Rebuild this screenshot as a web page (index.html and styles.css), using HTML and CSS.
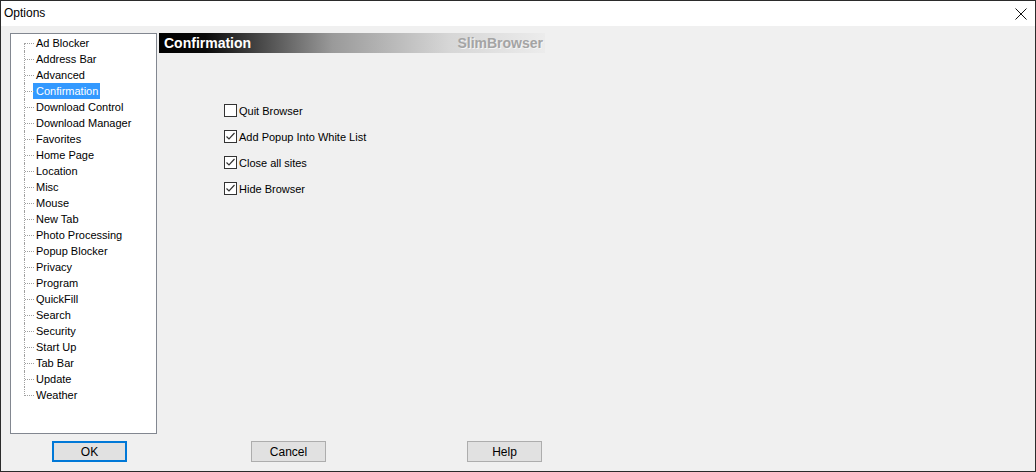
FILE: index.html
```html
<!DOCTYPE html>
<html lang="en">

<head>
    <meta charset="UTF-8">
    <meta name="viewport" content="width=device-width, initial-scale=1.0">
    <title>Options</title>
    <link rel="stylesheet" href="styles.css">
</head>

<body>
    <div class="window">
        <div class="titlebar">
            <span class="title">Options</span>
            <svg class="close" width="12" height="12" viewBox="0 0 12 12">
                <path d="M0.5 0.5 L11.5 11.5 M11.5 0.5 L0.5 11.5" stroke="#111" stroke-width="1" fill="none" />
            </svg>
        </div>
        <div class="content">
            <div class="main">
                <ul class="tree">
                    <li><span>Ad Blocker</span></li>
                    <li><span>Address Bar</span></li>
                    <li><span>Advanced</span></li>
                    <li class="selected"><span>Confirmation</span></li>
                    <li><span>Download Control</span></li>
                    <li><span>Download Manager</span></li>
                    <li><span>Favorites</span></li>
                    <li><span>Home Page</span></li>
                    <li><span>Location</span></li>
                    <li><span>Misc</span></li>
                    <li><span>Mouse</span></li>
                    <li><span>New Tab</span></li>
                    <li><span>Photo Processing</span></li>
                    <li><span>Popup Blocker</span></li>
                    <li><span>Privacy</span></li>
                    <li><span>Program</span></li>
                    <li><span>QuickFill</span></li>
                    <li><span>Search</span></li>
                    <li><span>Security</span></li>
                    <li><span>Start Up</span></li>
                    <li><span>Tab Bar</span></li>
                    <li><span>Update</span></li>
                    <li><span>Weather</span></li>
                </ul>
                <div class="panel">
                    <div class="banner">
                        <span class="banner-title">Confirmation</span>
                        <span class="banner-brand">SlimBrowser</span>
                    </div>
                    <div class="options">
                        <label class="option"><span class="box"></span>Quit Browser</label>
                        <label class="option"><span class="box checked"><svg width="11" height="11" viewBox="0 0 11 11"><path d="M1.5 5.5 L4 8 L9.5 2" stroke="#333" stroke-width="1.2" fill="none" /></svg></span>Add Popup Into White List</label>
                        <label class="option"><span class="box checked"><svg width="11" height="11" viewBox="0 0 11 11"><path d="M1.5 5.5 L4 8 L9.5 2" stroke="#333" stroke-width="1.2" fill="none" /></svg></span>Close all sites</label>
                        <label class="option"><span class="box checked"><svg width="11" height="11" viewBox="0 0 11 11"><path d="M1.5 5.5 L4 8 L9.5 2" stroke="#333" stroke-width="1.2" fill="none" /></svg></span>Hide Browser</label>
                    </div>
                </div>
            </div>
            <div class="buttons">
                <button class="btn ok">OK</button>
                <button class="btn cancel">Cancel</button>
                <button class="btn help">Help</button>
            </div>
        </div>
    </div>
</body>

</html>
```

FILE: styles.css
```css
body {
    margin: 0;
    font-family: "Liberation Sans", Arial, sans-serif;
    font-size: 11px;
    color: #000;
}

.window {
    width: 1036px;
    height: 472px;
    box-sizing: border-box;
    border: 1px solid #2b2b2b;
    background: #f0f0f0;
    display: flex;
    flex-direction: column;
}

.titlebar {
    height: 25px;
    background: #fff;
    display: flex;
    align-items: center;
    justify-content: space-between;
    padding: 0 8px 0 3px;
}

.title {
    font-size: 12px;
    padding-bottom: 1px;
}

.content {
    padding: 7px 0 0 9px;
}

.main {
    display: flex;
    gap: 2px;
}

.tree {
    list-style: none;
    margin: 0;
    padding: 1px 0 0 0;
    width: 147px;
    height: 401px;
    box-sizing: border-box;
    border: 1px solid #828790;
    background: #fff;
}

.tree li {
    position: relative;
    height: 16px;
    line-height: 16px;
    padding-left: 22px;
}

.tree li::before {
    content: '';
    position: absolute;
    left: 14px;
    top: 8px;
    width: 9px;
    border-top: 1px dotted #a0a0a0;
}

.tree li::after {
    content: '';
    position: absolute;
    left: 13px;
    top: 0;
    height: 16px;
    border-left: 1px dotted #a0a0a0;
}

.tree li:first-child::after {
    top: 8px;
    height: 8px;
}

.tree li:last-child::after {
    height: 9px;
}

.tree li span {
    display: inline-block;
    padding: 0 2px 0 3px;
}

.tree li.selected span {
    background: #3399ff;
    color: #fff;
}

.panel {
    display: flex;
    flex-direction: column;
}

.banner {
    width: 386px;
    height: 20px;
    display: flex;
    align-items: center;
    justify-content: space-between;
    padding: 0 2px 0 5px;
    box-sizing: border-box;
    background: linear-gradient(90deg, #000 0%, #0a0a0a 12%, #9a9a9a 45%, #d6d6d6 75%, #ececec 100%);
    font-weight: bold;
    font-size: 14px;
}

.banner-title {
    color: #fff;
}

.banner-brand {
    color: #a4a4a4;
    text-shadow: 1px 1px 0 #f4f4f4;
}

.options {
    display: flex;
    flex-direction: column;
    gap: 13px;
    margin: 51px 0 0 65px;
}

.option {
    display: flex;
    align-items: center;
    height: 13px;
    gap: 2px;
}

.box {
    width: 13px;
    height: 13px;
    box-sizing: border-box;
    border: 1px solid #333;
    background: #fff;
    display: flex;
    align-items: center;
    justify-content: center;
}

.buttons {
    display: flex;
    margin-top: 7px;
}

.btn {
    width: 75px;
    height: 21px;
    box-sizing: border-box;
    border: 1px solid #adadad;
    background: #e1e1e1;
    font-family: "Liberation Sans", Arial, sans-serif;
    font-size: 12px;
    color: #000;
    padding: 0;
}

.btn.ok {
    border: 2px solid #0078d7;
    margin-left: 42px;
}

.btn.cancel {
    margin-left: 124px;
}

.btn.help {
    margin-left: 141px;
}
```
